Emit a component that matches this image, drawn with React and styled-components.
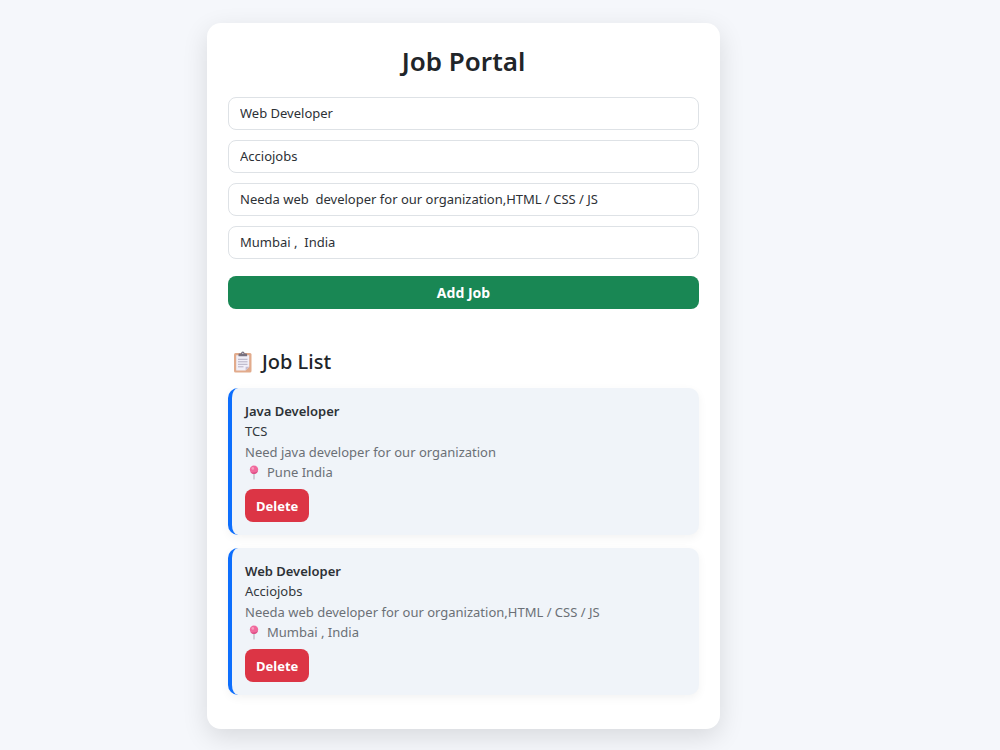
// dependencies
import { useState } from 'react';
import styled, { createGlobalStyle } from 'styled-components';

const initialJobs = [
  {
    id: 1,
    title: 'Java Developer',
    company: 'TCS',
    description: 'Need java developer for our organization',
    location: 'Pune India'
  },
  {
    id: 2,
    title: 'Web Developer',
    company: 'Acciojobs',
    description: 'Needa web developer for our organization,HTML / CSS / JS',
    location: 'Mumbai , India'
  }
]

const fields = [
  { name: 'title', label: 'Job Title' },
  { name: 'company', label: 'Company' },
  { name: 'description', label: 'Description' },
  { name: 'location', label: 'Location' }
]

export default function App() {
  const [jobs, setJobs] = useState(initialJobs);
  const [form, setForm] = useState({
    title: 'Web Developer',
    company: 'Acciojobs',
    description: 'Needa web  developer for our organization,HTML / CSS / JS',
    location: 'Mumbai ,  India'
  });

  const handleChange = e => setForm({ ...form, [e.target.name]: e.target.value });

  const addJob = e => {
    e.preventDefault();
    setJobs([...jobs, { ...form, id: Date.now() }]);
  }

  const deleteJob = id => setJobs(jobs.filter(job => job.id !== id));

  return (
    <>
      <GlobalStyle />
      <Page>
        <Portal>
          <Title>Job Portal</Title>
          <Form onSubmit={addJob}>
            {
              fields.map(field => (
                <Input
                  key={field.name}
                  type="text"
                  name={field.name}
                  aria-label={field.label}
                  placeholder={field.label}
                  value={form[field.name]}
                  onChange={handleChange}
                />
              ))
            }
            <AddButton type="submit">Add Job</AddButton>
          </Form>
          <ListTitle><ClipboardIcon />Job List</ListTitle>
          <JobList>
            {
              jobs.map(job => (
                <JobItem key={job.id}>
                  <JobName>{job.title}</JobName>
                  <Company>{job.company}</Company>
                  <Details>
                    <p>{job.description}</p>
                    <Location><PinIcon />{job.location}</Location>
                  </Details>
                  <DeleteButton type="button" onClick={() => deleteJob(job.id)}>Delete</DeleteButton>
                </JobItem>
              ))
            }
          </JobList>
        </Portal>
      </Page>
    </>
  )
}

function ClipboardIcon() {
  return (
    <svg width="20" height="22" viewBox="0 0 20 22" aria-hidden="true">
      <rect x="1" y="2" width="17.5" height="19.5" rx="1.5" fill="#e2ab8c" />
      <path d="M3.2 4.2h13v11.6l-3.6 3.8H3.2z" fill="#f1eff8" />
      <path d="M16.2 15.8l-3.6 3.8v-3.8z" fill="#c5bdd3" />
      <path d="M5 8.3h9.5M5 10.8h9.5M5 13.3h9.5M5 15.8h5.5" stroke="#b5afc4" strokeWidth="1" />
      <path d="M5.5 5.2V3.4q0-1 1-1H8q.2-1.8 1.8-1.8t1.8 1.8h1.5q1 0 1 1v1.8z" fill="#77717f" />
      <circle cx="9.8" cy="2.4" r=".7" fill="#d5cfdc" />
    </svg>
  )
}

function PinIcon() {
  return (
    <svg width="10" height="15" viewBox="0 0 10 15" aria-hidden="true">
      <path d="M5 7v7" stroke="#b9b6c0" strokeWidth="1.2" strokeLinecap="round" />
      <circle cx="5" cy="4.8" r="4.2" fill="#f0699c" />
      <path d="M1.4 7a4.2 4.2 0 0 0 7.6-1q-3.5 2.5-7.6 1z" fill="#dc4f86" />
      <circle cx="3.8" cy="3.4" r="1.3" fill="#f99dc0" />
    </svg>
  )
}

const GlobalStyle = createGlobalStyle `
  * {
    box-sizing: border-box;
  }

  body {
    margin: 0;
    background: #f5f7fb;
    color: #212529;
    font-family: 'Noto Sans', 'Open Sans', sans-serif;
    font-size: 13px;
    line-height: 20px;
  }

  h1, h2, h3, p, ul {
    margin: 0;
    padding: 0;
  }
`

const Page = styled.main `
  display: flex;
  justify-content: center;
  padding: 23px 73px 21px 0;
`

const Portal = styled.section `
  width: 100%;
  max-width: 513px;
  padding: 21px 21px 34px;
  background: #fff;
  border-radius: 14px;
  box-shadow: 0 8px 26px rgba(0, 0, 0, 0.12);
`

const Title = styled.h1 `
  font-size: 26px;
  font-weight: 600;
  line-height: 34px;
  text-align: center;
`

const Form = styled.form `
  display: flex;
  flex-direction: column;
  gap: 10px;
  margin-top: 19px;
`

const Input = styled.input `
  width: 100%;
  height: 33px;
  padding: 0 11px 2px;
  color: #2d3136;
  font: inherit;
  background: #fff;
  border: 1px solid #dee2e6;
  border-radius: 8px;
`

const Button = styled.button `
  height: 33px;
  padding: 0 11px;
  color: #fff;
  font: inherit;
  font-weight: 700;
  border: none;
  border-radius: 8px;
  cursor: pointer;
`

const AddButton = styled(Button) `
  margin-top: 7px;
  font-size: 14px;
  background: #198754;
`

const DeleteButton = styled(Button) `
  margin-top: 7px;
  background: #dc3545;
`

const ListTitle = styled.h2 `
  display: flex;
  align-items: center;
  gap: 9px;
  margin-top: 40px;
  padding-left: 5px;
  font-size: 20px;
  font-weight: 500;
  line-height: 26px;
`

const JobList = styled.ul `
  display: flex;
  flex-direction: column;
  gap: 13px;
  margin-top: 13px;
  list-style: none;
`

const JobItem = styled.li `
  padding: 13px;
  background: #f0f4f9;
  border-left: 4px solid #0d6efd;
  border-radius: 10px;
  box-shadow: 0 3px 10px rgba(0, 0, 0, 0.05);
`

const JobName = styled.h3 `
  color: #2d3136;
  font-size: 13px;
  font-weight: 600;
`

const Company = styled.p `
  color: #33383d;
`

const Details = styled.div `
  margin-top: 1px;
  color: #6b7076;
`

const Location = styled.p `
  display: flex;
  align-items: center;
  gap: 8px;
  padding-left: 4px;
`
